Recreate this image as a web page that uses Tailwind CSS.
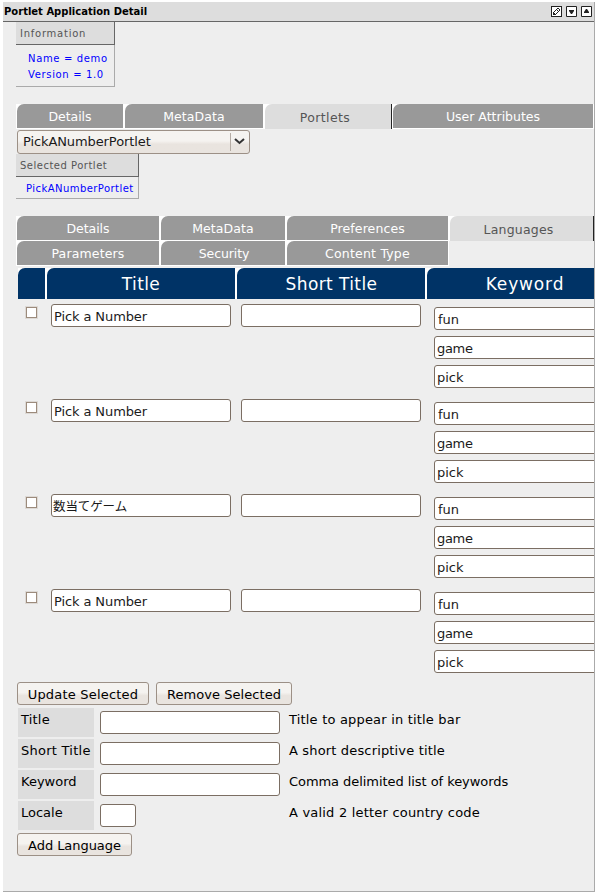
<!DOCTYPE html>
<html lang="en">
<head>
<meta charset="utf-8">
<title>Portlet Application Detail</title>
<script src="https://cdn.jsdelivr.net/npm/@tailwindcss/browser@4"></script>
</head>
<body class="bg-white font-['DejaVu_Sans','Noto_Sans_CJK_JP',sans-serif] text-[13px] leading-4 text-black">
<main class="ml-[3px] mt-[2px] h-[890px] w-[592px] overflow-hidden border-r border-b border-[#aaa] bg-[#eee]">
  <header class="-mr-px flex h-5 items-center gap-1 border-r border-b border-[#666] bg-[#ddd] pl-[1px] pr-[2px]">
    <h1 class="grow whitespace-nowrap pt-px text-[10px] font-bold">Portlet Application Detail</h1>
    <svg class="-mt-px size-[11px] shrink-0" viewBox="0 0 11 11" shape-rendering="crispEdges"><path fill="#fff" stroke="#222" d="M.5.5h10v10H.5z"/><path fill="#222" d="M6 2h2v1H6zM5 3h1v1H5zM8 3h1v2H8zM4 4h1v1H4zM7 5h1v1H7zM3 5h1v1H3zM6 6h1v1H6zM2 6h1v3H2zM5 7h1v1H5zM3 8h2v1H3zM6 4h1v1H6zM3 7h1v1H3z"/></svg>
    <svg class="-mt-px size-[11px] shrink-0" viewBox="0 0 11 11"><path fill="#fff" stroke="#222" d="M.5.5h10v10H.5z"/><path fill="#222" d="M3 4h5v1L6 8H5L3 5z"/></svg>
    <svg class="-mt-px size-[11px] shrink-0" viewBox="0 0 11 11"><path fill="#fff" stroke="#222" d="M.5.5h10v10H.5z"/><path fill="#222" d="M5 3h1l2 3v1H3V6z"/></svg>
  </header>

  <section class="ml-[13px] h-[65px] w-[99px] border-r border-b border-[#aaa] text-[10px]">
    <h2 class="-mr-px h-[23px] border-r border-b border-[#666] bg-[#ddd] pl-1 pt-[4px] tracking-[0.75px] text-[#555]">Information</h2>
    <p class="whitespace-nowrap pl-3 pt-[6px] tracking-[0.65px] text-[#00f]">Name = demo<br>Version = 1.0</p>
  </section>

  <nav class="ml-[13px] mt-[17px] flex h-[25px] w-[578px] text-center text-[12.5px] text-white">
    <a class="w-[108px] border-x border-b border-white bg-white"><span class="block h-6 rounded-tl-[7px] bg-[#999] pt-[5px] tracking-[-0.05px]">Details</span></a>
    <a class="w-[140px] border-x border-b border-white bg-white"><span class="block h-6 rounded-tl-[7px] bg-[#999] pt-[5px] tracking-[0.1px]">MetaData</span></a>
    <a class="w-[128px] border-l border-white bg-white"><span class="block h-[25px] rounded-tl-[7px] border-r border-[#222] bg-[#ddd] pt-[6px] pr-[6px] tracking-[0.4px] text-[#555]">Portlets</span></a>
    <a class="w-[202px] border-x border-b border-white bg-white"><span class="block h-6 rounded-tl-[7px] bg-[#999] pt-[5px] tracking-[0px]">User Attributes</span></a>
  </nav>

  <div class="ml-[14px] mt-px flex h-6 w-[233px] rounded-[3px] border border-[#9c9086] bg-linear-to-b from-[#f5f3f0] from-45% to-[#e9e4df] to-60%">
    <span class="grow pl-[5px] pt-[3px] tracking-[-0.1px] text-[#1a1a1a]">PickANumberPortlet</span>
    <span class="my-[2px] w-[19px] border-l border-[#b5aca4] pl-[3px] pt-[3px]"><svg class="size-[11px]" viewBox="0 0 11 11" fill="none" stroke="#333" stroke-width="2"><path d="M1 3l4.5 4L10 3"/></svg></span>
  </div>

  <section class="ml-[13px] h-[45px] w-[123px] border-r border-b border-[#aaa] text-[10px]">
    <h2 class="-mr-px h-[23px] border-r border-b border-[#666] bg-[#ddd] pl-1 pt-[4px] tracking-[0.5px] text-[#555]">Selected Portlet</h2>
    <p class="whitespace-nowrap pl-[10px] pt-[4px] tracking-[0.45px] text-[#00f]">PickANumberPortlet</p>
  </section>

  <nav class="ml-[13px] mt-[17px] grid h-[50px] w-[578px] grid-cols-[144px_126px_163px_145px] grid-rows-[25px_25px] text-center text-[12.5px] text-white">
    <a class="border-x border-b border-white bg-white"><span class="block h-6 rounded-tl-[7px] bg-[#999] pt-[5px] tracking-[-0.05px]">Details</span></a>
    <a class="border-x border-b border-white bg-white"><span class="block h-6 rounded-tl-[7px] bg-[#999] pt-[5px] tracking-[0.1px]">MetaData</span></a>
    <a class="border-x border-b border-white bg-white"><span class="block h-6 rounded-tl-[7px] bg-[#999] pt-[5px] tracking-[0.1px]">Preferences</span></a>
    <a class="border-l border-white bg-white"><span class="block h-[25px] rounded-tl-[7px] border-r border-[#222] bg-[#ddd] pt-[6px] pr-[6px] tracking-[0.2px] text-[#555]">Languages</span></a>
    <a class="border-x border-b border-white bg-white"><span class="block h-6 rounded-tl-[7px] bg-[#999] pt-[5px] tracking-[0.15px]">Parameters</span></a>
    <a class="border-x border-b border-white bg-white"><span class="block h-6 rounded-tl-[7px] bg-[#999] pt-[5px] pl-[2px] tracking-[-0.1px]">Security</span></a>
    <a class="border-x border-b border-white bg-white"><span class="block h-6 rounded-tl-[7px] bg-[#999] pt-[5px] tracking-[0.2px]">Content Type</span></a>
  </nav>

  <div class="ml-[15px] mt-[2px] grid h-[31px] w-[605px] grid-cols-[27px_188px_188px_196px] grid-rows-[31px] gap-x-[2px] bg-white text-center text-[17px] leading-[32px] tracking-[0.4px] text-white">
    <span class="rounded-tl-[7px] bg-[#036]"></span>
    <span class="rounded-tl-[7px] bg-[#036]">Title</span>
    <span class="rounded-tl-[7px] bg-[#036] pl-px">Short Title</span>
    <span class="rounded-tl-[7px] bg-[#036] tracking-[0.85px]">Keyword</span>
  </div>
  <div id="rows"></div>
  <template id="row">
    <div class="flex h-[95px] w-[640px] pl-[23px] pt-[5px] text-[#1a1a1a]">
      <span class="mt-[3px] size-[11px] shrink-0 border border-[#9c8b7c] bg-white outline outline-[#ddd9d5]"></span>
      <span class="title ml-[14px] h-[23px] w-[180px] shrink-0 rounded-[3px] border border-[#7b6e63] bg-white pl-[2px] pt-[4px] tracking-[-0.1px]"></span>
      <span class="ml-[10px] h-[23px] w-[180px] shrink-0 rounded-[3px] border border-[#7b6e63] bg-white"></span>
      <div class="ml-[13px] mt-[3px] flex w-[180px] shrink-0 flex-col gap-[6px]">
        <span class="h-[23px] rounded-[3px] border border-[#7b6e63] bg-white pl-[3px] pt-[4px]">fun</span>
        <span class="h-[23px] rounded-[3px] border border-[#7b6e63] bg-white pl-[2px] pt-[4px] tracking-[-0.3px]">game</span>
        <span class="h-[23px] rounded-[3px] border border-[#7b6e63] bg-white pl-[2px] pt-[4px]">pick</span>
      </div>
    </div>
  </template>

  <div class="ml-[14px] mt-[3px] flex h-[23px] gap-[7px] text-center tracking-[0.2px]">
    <button class="w-[132px] rounded-[3px] border border-[#9c9086] bg-linear-to-b from-[#f5f3f0] from-45% to-[#e9e4df] to-60% pt-[2px]">Update Selected</button>
    <button class="w-[136px] rounded-[3px] border border-[#9c9086] bg-linear-to-b from-[#f5f3f0] from-45% to-[#e9e4df] to-60% pt-[2px] tracking-[0.05px]">Remove Selected</button>
  </div>

  <div class="ml-[15px] mt-[3px] grid grid-cols-[76px_180px_1fr] grid-rows-[29px_29px_29px_29px] gap-y-[2px] whitespace-nowrap">
    <span class="bg-[#ddd] pl-[3px] pt-[4px] tracking-[0.2px]">Title</span><span class="ml-[6px] mt-[3px] h-[23px] w-[180px] rounded-[3px] border border-[#7b6e63] bg-white"></span><span class="pl-[15px] pt-[4px] tracking-[0.19px]">Title to appear in title bar</span>
    <span class="bg-[#ddd] pl-[3px] pt-[4px] tracking-[0.25px]">Short Title</span><span class="ml-[6px] mt-[3px] h-[23px] w-[180px] rounded-[3px] border border-[#7b6e63] bg-white"></span><span class="pl-[15px] pt-[4px] tracking-[0.16px]">A short descriptive title</span>
    <span class="bg-[#ddd] pl-[3px] pt-[4px]">Keyword</span><span class="ml-[6px] mt-[3px] h-[23px] w-[180px] rounded-[3px] border border-[#7b6e63] bg-white"></span><span class="pl-[15px] pt-[4px] tracking-[-0.06px]">Comma delimited list of keywords</span>
    <span class="bg-[#ddd] pl-[3px] pt-[4px]">Locale</span><span class="ml-[6px] mt-[3px] h-[23px] w-[36px] rounded-[3px] border border-[#7b6e63] bg-white"></span><span class="pl-[15px] pt-[4px] tracking-[0.2px]">A valid 2 letter country code</span>
  </div>
  <button class="ml-[14px] mt-[3px] block h-[23px] w-[115px] rounded-[3px] border border-[#9c9086] bg-linear-to-b from-[#f5f3f0] from-45% to-[#e9e4df] to-60% pt-[2px] tracking-[-0.05px]">Add Language</button>
</main>
<script>
  const rows = document.getElementById('rows');
  for (const title of ['Pick a Number', 'Pick a Number', '数当てゲーム', 'Pick a Number']) {
    const row = document.getElementById('row').content.cloneNode(true);
    const field = row.querySelector('.title');
    field.textContent = title;
    if (title === '数当てゲーム') {
      field.lang = 'ja';
      field.classList.add('text-[12.5px]', 'indent-[-1px]');
    }
    rows.append(row);
  }
</script>
</body>
</html>
